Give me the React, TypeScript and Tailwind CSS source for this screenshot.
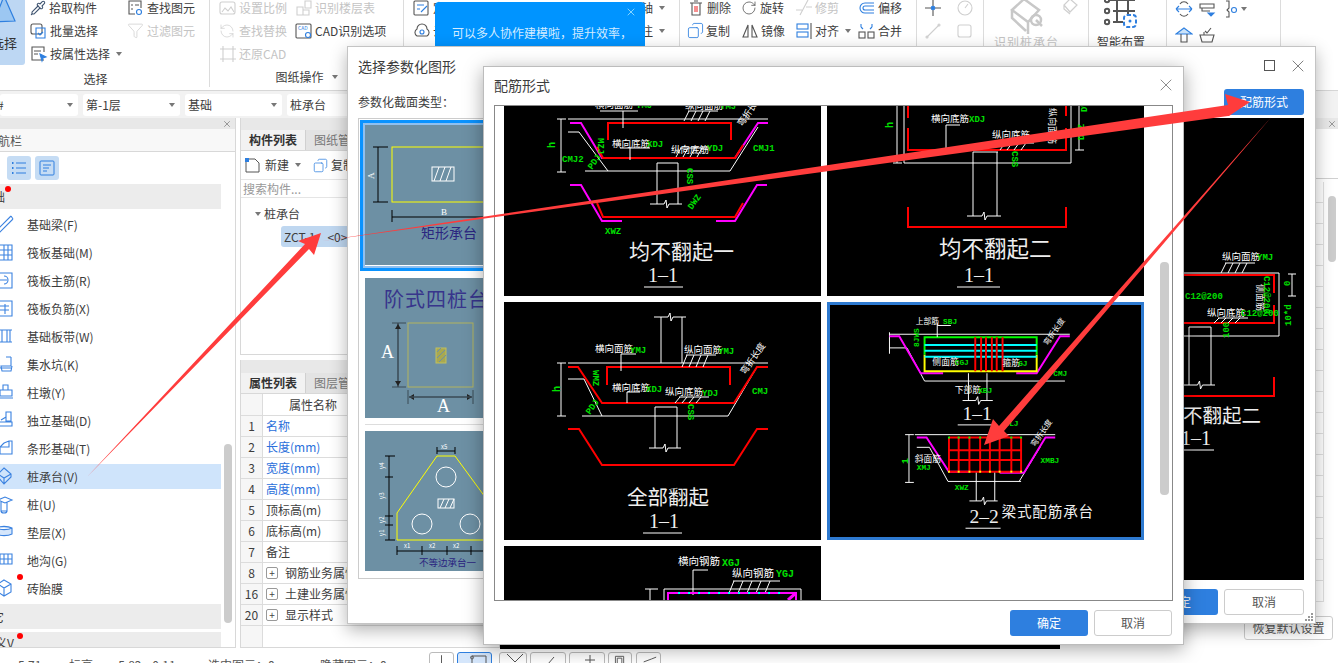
import { ReactNode } from 'react';
import { Copy, Filter, Pipette, RefreshCcw, RotateCw, X } from 'lucide-react';

const FONT = "font-['Noto_Sans_CJK_SC','Noto_Sans',sans-serif]";

const Caret = ({ className = '' }: { className?: string }) => (
  <span className={`inline-block w-0 h-0 border-x-[3px] border-x-transparent border-t-[4px] border-t-[#777] ${className}`} />
);

const Outline = ({ children, size = 18, color = '#555' }: { children: ReactNode; size?: number; color?: string }) => (
  <svg width={size} height={size} viewBox="0 0 18 18" fill="none" stroke={color} strokeWidth="1.1" className="shrink-0">
    {children}
  </svg>
);

const RibbonItem = ({
  icon,
  label,
  gray,
  caret,
  className = '',
}: {
  icon?: ReactNode;
  label: string;
  gray?: boolean;
  caret?: boolean;
  className?: string;
}) => (
  <div className={`h-[23px] flex items-center gap-[2px] whitespace-nowrap text-xs ${gray ? 'text-[#c4c4c4]' : 'text-[#3d3d3d]'} ${className}`}>
    {icon}
    <span>{label}</span>
    {caret && <Caret className="ml-1" />}
  </div>
);

const Group = ({
  width,
  label,
  caret,
  labelClass = '',
  children,
}: {
  width: string;
  label?: string;
  caret?: boolean;
  labelClass?: string;
  children: ReactNode;
}) => (
  <div className={`${width} shrink-0 h-[87px] border-r border-[#dcdcdc] flex flex-col relative`}>
    <div className="h-[70px] flex overflow-hidden">{children}</div>
    {label && (
      <div className={`flex-1 flex items-center justify-center gap-2 text-xs text-[#3d3d3d] ${labelClass}`}>
        {label}
        {caret && <Caret />}
      </div>
    )}
  </div>
);

const Ribbon = () => (
  <div className="h-[91px] flex border-b border-[#d6d6d6] bg-white overflow-hidden">
    <Group width="w-[210px]" label="选择" labelClass="pr-[18px]">
      <div className="w-[25px] h-[65px] bg-[#bdd7f3] rounded-br-[3px] relative overflow-hidden text-[13px] text-[#333]">
        <svg width="25" height="26" viewBox="0 0 25 26" fill="#9cc7f2" stroke="#2e7fdf" strokeWidth="1.2" className="absolute top-0 left-0">
          <path d="M-6 22 L4 -4 L15 21 Z" />
        </svg>
        <span className="absolute left-[-9px] top-[33px] whitespace-nowrap">选择</span>
      </div>
      <div className="w-[98px] ml-[5px] -mt-[4px] shrink-0">
        <RibbonItem
          label="拾取构件"
          icon={<Pipette size={16} color="#3f5470" strokeWidth={1.6} className="mr-[1px] w-[16px]" />}
        />
        <RibbonItem
          label="批量选择"
          icon={
            <Outline>
              <rect x="1" y="2" width="11" height="10" rx="2" />
              <path d="M6 6h9v10H6z" stroke="#2e7fdf" />
              <path d="M8 11l2 2 3-3" stroke="#2e7fdf" />
            </Outline>
          }
        />
        <RibbonItem
          label="按属性选择"
          caret
          icon={
            <Outline>
              <path d="M14 15H2V2h12v5" />
              <path d="M4 6h7M4 9h4" />
              <path d="M10 9l6 3-3 1-1 3z" fill="#2e7fdf" stroke="#2e7fdf" />
            </Outline>
          }
        />
      </div>
      <div className="-mt-[4px] ml-[-1px]">
        <RibbonItem
          label="查找图元"
          icon={
            <Outline>
              <path d="M8 15H2V2h12v7" />
              <path d="M4 6h2M8 6h4M4 10h2" />
              <circle cx="12" cy="13" r="2.5" stroke="#2e7fdf" />
            </Outline>
          }
        />
        <RibbonItem label="过滤图元" gray icon={<Filter size={17} color="#cfcfcf" strokeWidth={1.1} className="mr-[1px]" />} />
      </div>
    </Group>

    <Group width="w-[194px]" label="图纸操作" caret labelClass="pb-[2px]">
      <div className="ml-[9px] w-[97px] -mt-[4px] shrink-0">
        <RibbonItem
          label="设置比例"
          gray
          icon={
            <Outline color="#cfcfcf">
              <rect x="1" y="3" width="15" height="12" rx="2" />
              <path d="M3 13l3-4 3 3 3-4 3 5" />
            </Outline>
          }
        />
        <RibbonItem label="查找替换" gray icon={<RefreshCcw size={16} color="#cfcfcf" strokeWidth={1.1} className="mr-[2px]" />} />
        <RibbonItem
          label="还原CAD"
          gray
          icon={
            <Outline color="#cfcfcf">
              <path d="M4 1v16M1 4h16M14 1v16M1 14h16" />
            </Outline>
          }
        />
      </div>
      <div className="-mt-[4px] -ml-[21px]">
        <RibbonItem
          label="识别楼层表"
          gray
          icon={
            <Outline color="#cfcfcf">
              <path d="M2 8h6v8H2zM8 11h6v5H8zM10 2h6v7h-6z" />
            </Outline>
          }
        />
        <RibbonItem
          label="CAD识别选项"
          icon={
            <Outline>
              <rect x="1" y="2" width="15" height="14" rx="1" />
              <text x="3" y="8" fontSize="5" fill="#2e7fdf" stroke="none">CAD</text>
              <circle cx="13" cy="13" r="2.5" stroke="#2e7fdf" />
            </Outline>
          }
        />
      </div>
    </Group>

    <Group width="w-[276px]">
      <div className="w-full -mt-[4px] pl-[9px] pr-[14px] flex justify-between">
        <div>
          <RibbonItem
            label="定义"
            icon={
              <Outline>
                <rect x="1" y="2" width="14" height="14" rx="1" />
                <path d="M4 6h7M4 10h3M8 13l6-6" stroke="#2e7fdf" />
              </Outline>
            }
          />
          <RibbonItem
            label="云检查"
            icon={
              <Outline>
                <path d="M4 14a4 4 0 0 1 0-7 5 5 0 0 1 10 0 4 4 0 0 1 0 7z" />
                <circle cx="9" cy="10" r="2" stroke="#2e7fdf" />
              </Outline>
            }
          />
        </div>
        <div className="flex flex-col items-end">
          <RibbonItem label="轴" caret />
          <RibbonItem label="注" caret />
        </div>
      </div>
    </Group>

    <Group width="w-[237px]">
      <div className="-mt-[4px] ml-[7px] w-[54px] shrink-0">
        <RibbonItem
          label="删除"
          icon={
            <Outline>
              <path d="M3 4h12M5 4v12h8V4M7 2h4" />
              <path d="M8 7v6M10 7v6" stroke="#e33" />
            </Outline>
          }
        />
        <RibbonItem label="复制" icon={<Copy size={17} color="#2e7fdf" strokeWidth={1.2} className="-scale-x-100" />} />
      </div>
      <div className="-mt-[4px] w-[54px] shrink-0">
        <RibbonItem label="旋转" icon={<RotateCw size={16} color="#555" strokeWidth={1.2} className="mr-[1px]" />} />
        <RibbonItem
          label="镜像"
          icon={
            <Outline>
              <path d="M7 3L2 15h5zM11 3l5 12h-5z" />
            </Outline>
          }
        />
      </div>
      <div className="-mt-[4px] w-[63px] shrink-0">
        <RibbonItem
          label="修剪"
          gray
          icon={
            <Outline color="#cfcfcf">
              <path d="M1 11h6M11 8h6M13 1L5 16" />
            </Outline>
          }
        />
        <RibbonItem
          label="对齐"
          caret
          icon={
            <Outline color="#2e7fdf">
              <rect x="2" y="2" width="11" height="5" />
              <rect x="2" y="10" width="11" height="5" />
              <path d="M16 1v16" stroke="#555" />
            </Outline>
          }
        />
      </div>
      <div className="-mt-[4px]">
        <RibbonItem
          label="偏移"
          icon={
            <Outline color="#2e7fdf">
              <path d="M16 4H7a5 5 0 0 0 0 10h9M16 7H7a2 2 0 0 0 0 4h9" />
            </Outline>
          }
        />
        <RibbonItem
          label="合并"
          icon={
            <Outline>
              <rect x="1" y="10" width="6" height="6" />
              <rect x="10" y="10" width="6" height="6" />
              <path d="M3 5l2 2M14 5l-2 2M3 2v3M14 2v3" stroke="#2e7fdf" />
            </Outline>
          }
        />
      </div>
    </Group>

    <Group width="w-[67px]">
      <div className="flex flex-wrap content-start w-full pl-[7px] gap-x-[14px] gap-y-[5px] -mt-[1px]">
        <Outline color="#555">
          <path d="M9 1v6M9 11v6M1 9h6M11 9h6" />
          <circle cx="9" cy="9" r="1.8" fill="#2e7fdf" stroke="#2e7fdf" />
        </Outline>
        <Outline color="#cfcfcf">
          <circle cx="9" cy="9" r="7" />
          <path d="M9 9l3-4" />
        </Outline>
        <Outline color="#cfcfcf">
          <path d="M3 15L15 3" />
          <circle cx="3" cy="15" r="1" />
          <circle cx="15" cy="3" r="1" />
        </Outline>
        <Outline color="#cfcfcf">
          <rect x="2" y="3" width="13" height="12" rx="2" />
        </Outline>
      </div>
    </Group>

    <Group width="w-[105px]">
      <div className="w-full relative">
        <svg width="42" height="42" viewBox="0 0 42 42" fill="none" stroke="#c8c8c8" strokeWidth="2.5" className="absolute left-[22px] -top-[4px]">
          <path d="M18 3L33 14 22 26 6 14zM6 14v8l14 13M22 26v12M30 24l6 6" />
          <circle cx="30" cy="24" r="5" />
        </svg>
        <svg width="18" height="20" viewBox="0 0 18 20" fill="none" stroke="#cfcfcf" strokeWidth="1.2" className="absolute left-[78px] -top-[3px]">
          <path d="M8 2l7 6-7 7-6-7zM2 8v4l6 5" />
        </svg>
        <span className="absolute left-[10px] top-[34px] text-xs leading-4 tracking-[1px] text-[#c4c4c4] whitespace-nowrap">识别桩承台</span>
      </div>
    </Group>

    <Group width="w-[78px]">
      <div className="w-full relative">
        <svg width="34" height="34" viewBox="0 0 34 34" fill="none" strokeWidth="2" className="absolute left-[15px] -top-[4px]">
          <path d="M5 4h26M9 15h22M9 26h10M13 0v26M24 0v18" stroke="#555" />
          <circle cx="3" cy="4" r="2.2" stroke="#555" />
          <circle cx="3" cy="15" r="2.2" stroke="#555" />
          <circle cx="3" cy="26" r="2.2" stroke="#555" />
          <rect x="20" y="19" width="12" height="12" rx="3" stroke="#2e7fdf" strokeDasharray="4 2" />
          <circle cx="26" cy="25" r="1.5" fill="#2e7fdf" stroke="none" />
        </svg>
        <span className="absolute left-[8px] top-[34px] text-xs leading-4 text-[#3d3d3d] whitespace-nowrap">智能布置</span>
      </div>
    </Group>

    <Group width="w-[114px]">
      <div className="flex flex-wrap content-start w-[100px] pl-[8px] gap-x-[5px] gap-y-[4px]">
        <Outline color="#2e7fdf">
          <path d="M1 9h16M1 9l3-3M1 9l3 3M17 9l-3-3M17 9l-3 3" />
          <path d="M5 4c2-3 6-3 8 0M5 14c2 3 6 3 8 0" stroke="#555" />
        </Outline>
        <Outline>
          <path d="M2 4h14v4H2zM4 8v3h8" />
          <path d="M10 13h6l-3 3z" fill="#2e7fdf" stroke="#2e7fdf" />
        </Outline>
        <div className="flex items-center gap-[2px]">
          <Outline>
            <path d="M5 1h3v7l-2 2 2 2v5H5" />
            <circle cx="13" cy="10" r="2.5" stroke="#2e7fdf" />
          </Outline>
          <Caret />
        </div>
        <div className="basis-full h-0" />
        <Outline color="#2e7fdf">
          <path d="M1 8l8-6 8 6z" fill="#cbe3f9" />
          <path d="M6 8v8h6V8" stroke="#555" />
        </Outline>
        <Outline>
          <path d="M2 9h14l-2 7H4zM6 9V6M7 5l2 2 4-5" />
        </Outline>
      </div>
    </Group>
  </div>
);

const FilterSelect = ({ label, className }: { label: string; className: string }) => (
  <div className={`${className} h-[22px] bg-white rounded-[3px] flex items-center justify-between pl-[3px] pr-[5px] text-xs text-[#3d3d3d] overflow-hidden`}>
    <span>{label}</span>
    <Caret />
  </div>
);

const FilterBar = () => (
  <div className="h-[27px] bg-[#f2f2f2] flex items-center gap-[5px]">
    <div className="w-[78px] h-[22px] bg-white rounded-[3px] flex items-center justify-between pr-[5px] text-xs text-[#3d3d3d] overflow-hidden">
      <span className="-ml-[3px]">#</span>
      <Caret />
    </div>
    <FilterSelect label="第-1层" className="w-[97px]" />
    <FilterSelect label="基础" className="w-[97px]" />
    <FilterSelect label="桩承台" className="w-[97px]" />
  </div>
);

type NavItem = { label: string; icon: ReactNode; active?: boolean; dot?: boolean };

const navStroke = { fill: 'none', stroke: '#3b82e0', strokeWidth: 1.1 };

const navItems: NavItem[] = [
  { label: '基础梁(F)', icon: <path d="M-4 16L11 1M-1 18L13 4M11 1l2 3" {...navStroke} /> },
  { label: '筏板基础(M)', icon: <path d="M0 2h12v15H0M4 2v15M8 2v15M0 7h12M0 12h12" {...navStroke} /> },
  { label: '筏板主筋(R)', icon: <path d="M0 2h12v15H0M0 9h7M4 5a3 3 0 0 1 0 8" {...navStroke} /> },
  { label: '筏板负筋(X)', icon: <path d="M0 2h12v15H0M0 7h9M0 11h9M5 5v10" {...navStroke} /> },
  { label: '基础板带(W)', icon: <path d="M0 3h12M0 15h12M2 3v12M7 3v12M10 3v12" {...navStroke} /> },
  { label: '集水坑(K)', icon: <path d="M11 2v9H1l1 5h9l1-5M6 2h5M0 13h11" {...navStroke} /> },
  { label: '柱墩(Y)', icon: <path d="M3 2h5v5H3zM0 7h12v6H0zM0 15h13" {...navStroke} /> },
  { label: '独立基础(D)', icon: <path d="M6 1h5v9H6zM1 9l5-3M-1 11h13v4H-1z" {...navStroke} /> },
  { label: '条形基础(T)', icon: <path d="M4 4l5-2h3v13H0V8h9V2M0 8l4-4" {...navStroke} /> },
  { label: '桩承台(V)', icon: <path d="M4 1l7 6v3l-7 7-6-7V7zM-2 7l6 4 7-4M4 11v6" {...navStroke} />, active: true },
  { label: '桩(U)', icon: <path d="M-2 5l7-3 7 3-7 3zM1 7v9h6V7M1 16a3 2 0 0 0 6 0" {...navStroke} /> },
  { label: '垫层(X)', icon: <path d="M-4 5a10 4 0 0 1 16 0v6a10 4 0 0 1-16 0zM-4 5a10 4 0 0 0 16 0" {...navStroke} fill="#d5e6fb" /> },
  { label: '地沟(G)', icon: <path d="M0 3h12v10H0zM0 8h12M4 3v10M8 3v10" {...navStroke} /> },
  { label: '砖胎膜', icon: <path d="M4 1l7 4v8l-7 4-6-4V5zM-2 5l6 4 7-4M4 9v8" {...navStroke} />, dot: true },
];

const LeftNav = () => (
  <div className="w-[236px] shrink-0 h-[530px] border-r border-b border-[#d8d8d8] flex flex-col">
    <div className="h-[11px] bg-[#e8e8e8] flex items-center justify-end pr-[3px]">
      <X size={10} color="#888" />
    </div>
    <div className="h-[23px] border-b border-[#d8d8d8] bg-[#f8f8f8] flex items-center text-xs text-[#555] pt-[2px]">
      <span className="-ml-[2px]">航栏</span>
    </div>
    <div className="h-[32px] flex items-center pl-[7px] gap-[4px]">
      <div className="w-6 h-6 bg-[#c5dcf4] rounded-[3px] flex items-center justify-center">
        <svg width="16" height="14" viewBox="0 0 16 14" fill="none" stroke="#2e7fdf">
          <path d="M5 2h10M5 7h10M5 12h10" />
          <path d="M1 2h1.5M1 7h1.5M1 12h1.5" strokeWidth="2" />
        </svg>
      </div>
      <div className="w-6 h-6 bg-[#c5dcf4] rounded-[3px] flex items-center justify-center">
        <svg width="16" height="16" viewBox="0 0 16 16" fill="none" stroke="#2e7fdf">
          <rect x="1" y="1" width="14" height="14" rx="1" />
          <path d="M4 5h8M4 8h6M4 11h4" />
        </svg>
      </div>
    </div>
    <div className="relative flex-1 overflow-hidden pr-[14px]">
      <div className="relative h-[25px] bg-[#ececec] flex items-center text-xs text-[#3d3d3d] mb-[3px]">
        <span className="-ml-[19px]">基础</span>
        <span className="absolute left-[5px] top-[2px] w-[6px] h-[6px] rounded-full bg-[#f00]" />
      </div>
      {navItems.map((item) => (
        <div
          key={item.label}
          className={`relative h-[25px] mb-[3px] flex items-center text-xs text-[#3d3d3d] ${item.active ? 'bg-[#cfe4fb]' : ''}`}
        >
          <svg width="14" height="19" viewBox="0 0 14 19" className="shrink-0 mr-[13px] overflow-hidden">
            {item.icon}
          </svg>
          {item.label}
          {item.dot && <span className="absolute left-[17px] top-[-2px] w-[6px] h-[6px] rounded-full bg-[#f00]" />}
        </div>
      ))}
      <div className="relative h-[25px] bg-[#ececec] flex items-center text-xs text-[#3d3d3d] mb-[3px]">
        <span className="-ml-[20px]">其它</span>
      </div>
      <div className="relative h-[25px] bg-[#ececec] flex items-start pt-[3px] text-xs text-[#3d3d3d]">
        <span className="-ml-[29px] whitespace-nowrap">自定义V</span>
        <span className="absolute left-[17px] top-[1px] w-[6px] h-[6px] rounded-full bg-[#f00]" />
      </div>
      <div className="absolute right-[3px] top-[260px] w-[8px] h-[179px] rounded bg-[#cccccc]" />
    </div>
  </div>
);

const propRows: { n: number; label: string; blue?: boolean; plus?: boolean }[] = [
  { n: 1, label: '名称', blue: true },
  { n: 2, label: '长度(mm)', blue: true },
  { n: 3, label: '宽度(mm)', blue: true },
  { n: 4, label: '高度(mm)', blue: true },
  { n: 5, label: '顶标高(m)' },
  { n: 6, label: '底标高(m)' },
  { n: 7, label: '备注' },
  { n: 8, label: '钢筋业务属性', plus: true },
  { n: 16, label: '土建业务属性', plus: true },
  { n: 20, label: '显示样式', plus: true },
];

const TabBar = ({ first, second }: { first: string; second: string }) => (
  <div className="h-[21px] flex bg-[#e3e3e3] text-xs border-b border-[#d8d8d8]">
    <div className="w-[65px] flex items-center justify-center font-bold bg-[#f2f2f2] text-[#333] border-r border-[#d0d0d0]">{first}</div>
    <div className="flex items-center pl-[8px] text-[#777]">{second}</div>
  </div>
);

const MiddlePanel = () => (
  <div className="w-[260px] shrink-0 ml-[4px] flex flex-col">
    <div className="h-[237px] border border-[#d8d8d8] border-t-0 flex flex-col">
      <div className="h-[12px] bg-[#e8e8e8]" />
      <TabBar first="构件列表" second="图纸管理" />
      <div className="h-[28px] flex items-center pl-[4px] text-xs text-[#3d3d3d]">
        <svg width="15" height="15" viewBox="0 0 15 15" fill="none" stroke="#555" className="mr-[5px]">
          <path d="M1 1h9l4 4v9H1z" />
          <rect x="0" y="0" width="4" height="4" fill="#2e7fdf" stroke="none" />
        </svg>
        新建
        <Caret className="ml-[6px] mr-[12px]" />
        <Copy size={15} color="#2e7fdf" strokeWidth={1.2} className="-scale-x-100 mr-[3px]" />
        复制
      </div>
      <div className="h-[19px] border-y border-[#e5e5e5] pl-[2px] flex items-center text-xs text-[#999]">搜索构件...</div>
      <div className="h-[28px] flex items-center pl-[14px] text-xs text-[#3d3d3d] pt-[3px]">
        <Caret className="mr-[3px]" />
        桩承台
      </div>
      <div className="ml-[40px] h-[21px] bg-[#bfd7f0] rounded-l-[3px] flex items-center pl-[3px] text-xs text-[#3d3d3d]">
        ZCT-1<span className="ml-[12px]">&lt;0&gt;</span>
      </div>
    </div>
    <div className="h-[5px]" />
    <div className="h-[288px] border border-[#d8d8d8] border-t-0 flex flex-col">
      <div className="h-[13px] bg-[#e8e8e8]" />
      <TabBar first="属性列表" second="图层管理" />
      <div className="flex h-[22px] border-b border-[#dcdcdc] text-xs text-[#3d3d3d]">
        <div className="w-[22px] bg-[#f6f6f6] border-r border-[#dcdcdc]" />
        <div className="pl-[26px] leading-[21px]">属性名称</div>
      </div>
      {propRows.map((r) => (
        <div key={r.n} className="flex h-[21px] border-b border-[#dcdcdc] text-xs">
          <div className="w-[22px] bg-[#f6f6f6] border-r border-[#dcdcdc] text-center leading-[20px] text-[#3d3d3d]">{r.n}</div>
          <div className={`flex items-center pl-[3px] whitespace-nowrap ${r.blue ? 'text-[#2a6fdb]' : 'text-[#3d3d3d]'}`}>
            {r.plus && (
              <span className="w-[12px] h-[12px] border border-[#999] rounded-[2px] flex items-center justify-center text-[10px] leading-none mr-[7px] text-[#444]">+</span>
            )}
            {r.label}
          </div>
        </div>
      ))}
      <div className="flex-1 flex">
        <div className="w-[22px] bg-[#f6f6f6] border-r border-[#dcdcdc]" />
      </div>
    </div>
  </div>
);

const RightPanel = () => (
  <div className="flex-1 ml-[4px] flex flex-col relative">
    <div className="h-[11px] bg-[#e8e8e8] flex items-center justify-end pr-[1px]">
      <X size={10} color="#888" />
    </div>
    <div className="h-[50px] border-b border-[#d0d0d0]" />
    <div className="h-[3px]" />
    {Array.from({ length: 20 }).map((_, i) => (
      <div key={i} className="h-[21px] w-[260px] border-b border-r border-[#e0e0e0] shrink-0" />
    ))}
    <div className="absolute right-[2px] top-[78px] w-[8px] h-[66px] rounded bg-[#cccccc]" />
    <div className="absolute right-[5px] top-[498px] w-[89px] h-[24px] bg-white border border-[#ccc] rounded-[3px] flex items-center justify-center text-xs text-[#555]">
      恢复默认设置
    </div>
  </div>
);

const statusTools: { w: string; ml: string; active?: boolean; icon: ReactNode }[] = [
  { w: 'w-[25px]', ml: '', icon: <path d="M12 2v9h8" /> },
  { w: 'w-[35px]', ml: 'ml-[3px]', active: true, icon: <path d="M9 3h14v9H9zM9 3a1.5 1.5 0 1 0 .1 0" /> },
  { w: 'w-[28px]', ml: 'ml-[7px]', icon: <path d="M6 1l8 8 8-8" /> },
  { w: 'w-[36px]', ml: 'ml-[3px]', icon: <path d="M12 11l6-7" /> },
  { w: 'w-[36px]', ml: 'ml-[3px]', icon: <path d="M10 7h10M15 2v9" /> },
  { w: 'w-[24px]', ml: 'ml-[3px]', icon: <path d="M7 3h9v9H7zM9 5h5v7H9z" /> },
  { w: 'w-[25px]', ml: 'ml-[4px]', icon: <path d="M7 9l8-3 5-2" /> },
];

const StatusBar = () => (
  <div className="h-[14px] flex text-xs text-[#555] bg-white overflow-hidden relative">
    <div className="flex pt-[8px] leading-4 whitespace-nowrap">
      <span className="ml-[18px] w-[51px]">5.71</span>
      <span className="w-[45px]">标高</span>
      <span className="w-[94px]">-5.82~-0.11</span>
      <span className="w-[112px]">选中图元：0</span>
      <span>隐藏图元：0</span>
    </div>
    <div className="absolute left-[429px] top-[3px] flex">
      {statusTools.map((t, i) => (
        <div
          key={i}
          className={`${t.w} ${t.ml} h-[20px] border rounded-[3px] flex justify-center ${t.active ? 'border-[#2e7fdf] bg-[#d5e6fb]' : 'border-[#bbb]'}`}
        >
          <svg width="24" height="14" viewBox="0 0 24 14" fill="none" stroke="#555">
            {t.icon}
          </svg>
        </div>
      ))}
    </div>
  </div>
);

const CadText = ({ x, y, t, size = 9.5, rotate }: { x: number; y: number; t: string; size?: number; rotate?: number }) => (
  <text x={x} y={y} fontSize={size} fill="#fff" transform={rotate ? `rotate(${rotate} ${x} ${y})` : undefined}>
    {t}
  </text>
);

const Green = ({ x, y, t, size = 9, rotate }: { x: number; y: number; t: string; size?: number; rotate?: number }) => (
  <text
    x={x}
    y={y}
    fontSize={size}
    fill="#00e000"
    className="font-['Liberation_Mono',monospace] font-bold"
    transform={rotate ? `rotate(${rotate} ${x} ${y})` : undefined}
  >
    {t}
  </text>
);

const Line = ({ p, c = '#fff', w = 1 }: { p: string; c?: string; w?: number }) => (
  <polyline points={p} fill="none" stroke={c} strokeWidth={w} />
);

const Big = ({ x, y, t, size = 20 }: { x: number; y: number; t: string; size?: number }) => (
  <text x={x} y={y} fontSize={size} fill="#eeeeee">
    {t}
  </text>
);

const Section = ({ x, y, t, x1, x2 }: { x: number; y: number; t: string; x1: number; x2: number }) => (
  <>
    <text x={x} y={y} fontSize={20} textAnchor="middle" fill="#eeeeee" className="font-['Liberation_Serif',serif]">
      {t}
    </text>
    <Line p={`${x1},${y + 5} ${x2},${y + 5}`} />
  </>
);

const Break = ({ x1, x2, y }: { x1: number; x2: number; y: number }) => {
  const m = (x1 + x2) / 2;
  return <Line p={`${x1},${y} ${m - 2},${y} ${m},${y - 4} ${m + 1},${y + 4} ${m + 3},${y} ${x2},${y}`} />;
};

// slanted strokes under a rebar label
const Hatch = ({ x, y, n = 4, gap = 7, h = 10 }: { x: number; y: number; n?: number; gap?: number; h?: number }) => (
  <>
    <Line p={`${x + 4},${y} ${x + n * gap + 6},${y}`} />
    {Array.from({ length: n }).map((_, i) => (
      <Line key={i} p={`${x + i * gap + 5},${y} ${x + i * gap},${y + h}`} />
    ))}
  </>
);

const CadCellOne = () => (
  <svg viewBox="504 106 317 190" className="w-[317px] h-[190px] bg-black">
    <Line p="568,119 768,119" />
    <Line p="561,119 561,172" />
    <Line p="557,119 566,119" />
    <Line p="557,172 566,172" />
    <Line p="585,171 730,171" />
    <Line p="568,132 579,132 608,171" />
    <Line p="730,171 758,127" />
    <Line p="570,123 581,123 602,158 622,158" c="#f0f" w="2" />
    <Line p="715,158 735,158 758,123 768,123" c="#f0f" w="2" />
    <Line p="608,140 608,123 731,123 731,140" c="#f00" w="2" />
    <Line p="597,147 603,158 735,158 743,145" c="#f00" w="2" />
    <Line p="657,163 657,204" />
    <Line p="678,163 678,204" />
    <Line p="657,163 678,163" />
    <Break x1={650} x2={682} y={204} />
    <Line p="570,185 581,185 602,221 622,221" c="#f0f" w="2" />
    <Line p="716,221 735,221 757,185 767,185" c="#f0f" w="2" />
    <Line p="597,203 603,217 735,217 743,203" c="#f00" w="2" />
    <Line p="600,111 638,111" />
    <Line p="623,111 623,128" />
    <Line p="630,147 630,160" />
    <Line p="620,148 650,148" />
    <Hatch x={684} y={111} />
    <Hatch x={676} y={148} h={9} />
    <CadText x={595} y={108} t="横向面筋" />
    <Green x={636} y={108} t="YMJ" />
    <CadText x={685} y={109} t="纵向面筋" />
    <Green x={720} y={109} t="YMJ" />
    <CadText x={612} y={147} t="横向底筋" />
    <Green x={647} y={147} t="XDJ" />
    <CadText x={671} y={153} t="纵向底筋" />
    <Green x={707} y={151} t="YDJ" />
    <Green x={562} y={162} t="CMJ2" />
    <Green x={753} y={151} t="CMJ1" />
    <Green x={555} y={148} t="h" size={10} rotate={-90} />
    <Green x={598} y={138} t="MZJ" rotate={90} />
    <Green x={592} y={170} t="PDJ" rotate={-55} />
    <Green x={692} y={210} t="DWZ" rotate={-55} />
    <Green x={605} y={234} t="XWZ" />
    <Green x={687} y={168} t="CSS" rotate={90} />
    <CadText x={742} y={127} t="弯折长度" size={9} rotate={-55} />
    <Big x={629} y={259} t="均不翻起一" size={21} />
    <Section x={663} y={282} t="1–1" x1={644} x2={683} />
  </svg>
);

const CadCellTwo = () => (
  <svg viewBox="827 106 317 190" className="w-[317px] h-[190px] bg-black">
    <Line p="904,106 904,163 1071,163 1071,106" />
    <Line p="897,106 897,163" />
    <Line p="893,163 902,163" />
    <Line p="908,106 908,118" c="#f00" w="2" />
    <Line p="908,128 908,150 1066,150 1066,128" c="#f00" w="2" />
    <Line p="1066,106 1066,116" c="#f00" w="2" />
    <Line p="1079,106 1079,150" />
    <Line p="1075,150 1084,150" />
    <Line p="973,152 998,152" />
    <Line p="973,152 973,216" />
    <Line p="997,152 997,216" />
    <Break x1={967} x2={1001} y={216} />
    <Line p="908,207 908,227 1066,227 1066,207" c="#f00" w="2" />
    <Line p="946,150 946,125 960,125" />
    <Hatch x={1000} y={143} h={7} />
    <CadText x={931} y={122} t="横向底筋" />
    <Green x={969} y={122} t="XDJ" />
    <CadText x={992} y={138} t="纵向底筋" />
    <CadText x={1049} y={108} t="纵向面筋" size={9} rotate={90} />
    <Green x={1087} y={112} t="DWZ" rotate={-90} />
    <Green x={1084} y={140} t="DWZ" rotate={-90} />
    <Green x={893} y={128} t="h" size={10} rotate={-90} />
    <Green x={1012} y={151} t="CSS" rotate={90} />
    <Big x={939} y={257} t="均不翻起二" size={22.5} />
    <Section x={979} y={282} t="1–1" x1={957} x2={1000} />
  </svg>
);

const CadCellThree = () => (
  <svg viewBox="504 302 317 238" className="w-[317px] h-[238px] bg-black">
    <Line p="661,317 661,363" />
    <Line p="682,317 682,363" />
    <Break x1={654} x2={686} y={317} />
    <Line p="568,363 768,363" />
    <Line p="561,363 561,416" />
    <Line p="557,363 566,363" />
    <Line p="557,416 566,416" />
    <Line p="568,379 584,379 602,416" />
    <Line p="582,416 728,416" />
    <Line p="728,416 757,367" />
    <Line p="568,367 578,367 602,403 734,403 757,367 768,367" c="#f00" w="2" />
    <Line p="607,385 607,367 730,367 730,385" c="#f00" w="2" />
    <Line p="655,407 677,407" />
    <Line p="655,407 655,448" />
    <Line p="677,407 677,448" />
    <Break x1={649} x2={681} y={448} />
    <Line p="568,429 579,429 602,465 734,465 757,429 768,429" c="#f00" w="2" />
    <Line p="621,371 621,354 636,354" />
    <Line p="627,403 627,392 640,392" />
    <Hatch x={682} y={355} h={12} />
    <Hatch x={675} y={397} h={6} />
    <CadText x={595} y={352} t="横向面筋" />
    <Green x={630} y={353} t="YMJ" />
    <CadText x={684} y={353} t="纵向面筋" />
    <Green x={718} y={354} t="YMJ" />
    <CadText x={612} y={391} t="横向底筋" />
    <Green x={646} y={392} t="XDJ" />
    <CadText x={665} y={395} t="纵向底筋" />
    <Green x={702} y={396} t="YDJ" />
    <Green x={752} y={394} t="CMJ" />
    <Green x={560} y={392} t="h" size={10} rotate={-90} />
    <Green x={593} y={370} t="WMZ" rotate={90} />
    <Green x={590} y={415} t="PDJ" rotate={-55} />
    <Green x={688} y={404} t="CSS" rotate={90} />
    <CadText x={745} y={375} t="弯折长度" size={9} rotate={-55} />
    <Big x={627} y={505} t="全部翻起" size={20.5} />
    <Section x={664} y={528} t="1–1" x1={643} x2={682} />
  </svg>
);

const gridV = [948, 958, 969, 980, 990, 1000, 1012, 1022];
const gridH = [438, 451, 461, 473];
const redV = [975, 981, 986, 992, 997, 1003];

const CadCellFour = () => (
  <svg viewBox="827 302 317 238" className="w-[317px] h-[238px] bg-black border-[3px] border-[#2e7ad0]">
    <Line p="887,332 1072,332" />
    <Line p="887,330 887,352" />
    <Line p="887,346 905,346 923,380" />
    <Line p="923,380 1067,380" />
    <Line p="887,334 897,334 919,372 942,372" c="#f0f" w="2" />
    <Line p="1017,372 1038,372 1062,334 1072,334" c="#f0f" w="2" />
    <Line p="923,353 923,370 1038,370 1038,353" c="#ff0" w="2" />
    <Line p="923,353 923,335 1038,335 1038,353" c="#0f0" w="2" />
    <Line p="923,343 1038,343" c="#0ff" w="2" />
    <Line p="923,349 1038,349" c="#0ff" w="2" />
    <Line p="923,355 1038,355" c="#0ff" w="2" />
    {redV.map((x) => (
      <Line key={x} p={`${x},335 ${x},370`} c="#f00" w="2" />
    ))}
    <Line p="968,372 968,400" />
    <Line p="987,372 987,400" />
    <Break x1={962} x2={993} y={400} />
    <Line p="936,320 936,335" />
    <Line p="936,323 950,323" />
    <CadText x={914} y={322} t="上部筋" size={8} />
    <Green x={942} y={321} t="SBJ" size={8} />
    <CadText x={931} y={364} t="侧面筋" size={9} />
    <Green x={954} y={364} t="CGJ" size={8} />
    <CadText x={1003} y={365} t="箍筋" size={9} />
    <Green x={1019} y={365} t="GJ" size={8} />
    <CadText x={954} y={392} t="下部筋" size={9} />
    <Green x={978} y={392} t="XBJ" size={8} />
    <Green x={1055} y={375} t="CMJ" size={8} />
    <Green x={917} y={345} t="8JWS" size={8} rotate={-90} />
    <CadText x={1049} y={344} t="弯折长度" size={8} rotate={-55} />
    <Section x={977} y={420} t="1–1" x1={957} x2={995} />

    <Line p="913,435 1057,435" />
    <Line p="907,435 907,484" />
    <Line p="903,435 912,435" />
    <Line p="903,484 912,484" />
    <Line p="915,448 928,448 947,483" />
    <Line p="1020,483 1042,447" />
    <Line p="947,483 1022,483" />
    <Line p="915,438 925,438 948,473 970,473" c="#f0f" w="2" />
    <Line p="1000,474 1025,474 1047,438 1057,438" c="#f0f" w="2" />
    {gridV.map((x) => (
      <Line key={x} p={`${x},438 ${x},473`} c="#f00" w="2" />
    ))}
    {gridH.map((y) => (
      <Line key={y} p={`948,${y} 1022,${y}`} c="#f00" w="2" />
    ))}
    {gridV.map((x) => (
      <rect key={x} x={x - 1} y={437} width="2" height="2" fill="#0f0" />
    ))}
    {gridV.map((x) => (
      <rect key={x} x={x - 1} y={472} width="2" height="2" fill="#ff0" />
    ))}
    <Line p="976,474 976,503" />
    <Line p="995,474 995,503" />
    <Break x1={969} x2={998} y={503} />
    <CadText x={913} y={463} t="斜面筋" size={9} />
    <Green x={915} y={471} t="XMJ" size={8} />
    <Green x={1042} y={464} t="XMBJ" size={8} />
    <Green x={954} y={492} t="XWZ" size={8} />
    <Green x={906} y={465} t="1" size={10} rotate={-90} />
    <Green x={1005} y={426} t="SLJ" size={8} />
    <CadText x={1036} y={448} t="弯折长度" size={8} rotate={-55} />
    <Section x={984} y={526} t="2–2" x1={965} x2={1001} />
    <text x={1002} y={519} fontSize={15} fill="#eeeeee" letterSpacing="0.8">
      梁式配筋承台
    </text>
  </svg>
);

const CadCellFive = () => (
  <svg viewBox="504 546 317 60" className="w-[317px] h-[60px] bg-black">
    <CadText x={678} y={565} t="横向钢筋" size={10.5} />
    <Green x={722} y={566} t="XGJ" size={10} />
    <CadText x={732} y={577} t="纵向钢筋" size={10.5} />
    <Green x={776} y={577} t="YGJ" size={10} />
    <Line p="693,595 693,570 708,570" />
    <Hatch x={729} y={581} n={5} gap={9} h={12} />
    <Line p="664,606 664,589 801,589 801,606" />
    <Line p="668,606 668,593 796,593 796,606" c="#f0f" w="2" />
    <Line p="788,600 796,593" c="#f0f" w="3" />
    <Line p="645,589 658,589" />
    <Line p="650,589 650,606" />
    {[678, 688, 698, 708, 718, 728, 738, 748, 758, 768, 778].map((x) => (
      <rect key={x} x={x} y={592} width="2" height="2" fill="#0ff" />
    ))}
  </svg>
);

const SideImage = () => (
  <svg viewBox="1184 118 120 462" className="w-[120px] h-[462px] bg-black">
    <Line p="1184,273 1279,273 1279,336 1184,336" />
    <Line p="1184,275 1274,275 1274,293" c="#f00" w="2" />
    <Line p="1274,305 1274,323 1184,323" c="#f00" w="2" />
    <Line p="1189,327 1211,327" />
    <Line p="1189,327 1189,385" />
    <Line p="1211,327 1211,385" />
    <Break x1={1184} x2={1215} y={385} />
    <Line p="1274,377 1274,396 1184,396" c="#f00" w="2" />
    <Line p="1292,274 1292,296" />
    <Line p="1288,274 1296,274" />
    <Line p="1288,296 1296,296" />
    <Hatch x={1221} y={263} h={10} />
    <Hatch x={1214} y={318} h={5} />
    <CadText x={1222} y={260} t="纵向面筋" />
    <Green x={1257} y={260} t="YMJ" />
    <Green x={1185} y={299} t="C12@200" />
    <CadText x={1207} y={316} t="纵向底筋" />
    <Green x={1241} y={316} t="C12@200" />
    <CadText x={1257} y={284} t="侧面筋" size={9} rotate={90} />
    <Green x={1264} y={276} t="C12@200" rotate={90} />
    <Green x={1291} y={326} t="10*d" rotate={-90} />
    <Green x={1290} y={286} t="0" rotate={-90} />
    <Green x={1229} y={338} t="100" rotate={-90} />
    <Big x={1183} y={423} t="不翻起二" size={19.5} />
    <text x={1181} y={445} fontSize={20} fill="#eeeeee" className="font-['Liberation_Serif',serif]">
      1–1
    </text>
    <Line p="1184,450 1214,450" />
  </svg>
);

const Card = ({ children }: { children: ReactNode }) => (
  <svg viewBox="365 0 150 140" className="w-[150px] h-[140px] bg-[#6d90a4] block">
    {children}
  </svg>
);

const ParamList = () => (
  <div className="w-[140px] h-[461px] border border-[#ccc] overflow-hidden bg-white">
    <div className="m-[1px] w-[250px] h-[151px] border-[3px] border-[#0a93ff] outline-2 outline-[#8fc0f0] -outline-offset-[5px] p-[2px]">
      <Card>
        <Line p="373,22 388,22" c="#000" />
        <Line p="378,22 378,77" c="#000" />
        <Line p="373,77 388,77" c="#000" />
        <rect x="392" y="22" width="150" height="55" fill="none" stroke="#ff0" />
        <rect x="432" y="42" width="22" height="14" fill="none" stroke="#fff" />
        <path d="M434 56l5-14M440 56l5-14M446 56l5-14" stroke="#fff" />
        <Line p="392,85 392,97" c="#000" />
        <Line p="392,92 520,92" c="#000" />
        <text x="441" y="90" fontSize="9" fill="#fff" className="font-['Liberation_Serif',serif]">B</text>
        <text x="374" y="54" fontSize="9" fill="#fff" transform="rotate(-90 374 54)" className="font-['Liberation_Serif',serif]">A</text>
        <text x="421" y="113" fontSize="14" fill="#2b2580">矩形承台</text>
      </Card>
    </div>
    <div className="h-[1px]" />
    <div className="ml-[6px] mt-[5px]">
      <Card>
        <text x="384" y="29" fontSize="20" fill="#38358c" letterSpacing="1">阶式四桩台</text>
        <rect x="408" y="45" width="65" height="64" fill="none" stroke="#b3b35e" />
        <rect x="436" y="70" width="10" height="15" fill="#a8a850" stroke="#c0c060" />
        <path d="M437 74l4-4M437 80l8-8M439 84l7-7" stroke="#6d90a4" />
        <Line p="398,45 398,109" c="#3a4a55" w="1.5" />
        <Line p="392,45 406,45" c="#3a4a55" />
        <Line p="392,109 406,109" c="#3a4a55" />
        <path d="M398 46l-3 5h6zM398 108l-3-5h6zM409 119l5-3v6zM472 119l-5-3v6z" fill="#222" />
        <Line p="409,119 472,119" c="#3a4a55" w="1.5" />
        <Line p="408,112 408,126" c="#3a4a55" />
        <Line p="473,112 473,126" c="#3a4a55" />
        <text x="381" y="80" fontSize="18" fill="#fff" className="font-['Liberation_Serif',serif]">A</text>
        <text x="437" y="134" fontSize="18" fill="#fff" className="font-['Liberation_Serif',serif]">A</text>
      </Card>
    </div>
    <div className="border-t border-[#ddd] mt-[6px] ml-[6px] pt-[6px]">
      <Card>
        <polygon points="397,109 397,82 437,25 455,25 510,100 510,109" fill="none" stroke="#ff0" />
        <circle cx="446" cy="46" r="10" fill="none" stroke="#fff" />
        <circle cx="422" cy="93" r="10" fill="none" stroke="#fff" />
        <circle cx="470" cy="93" r="10" fill="none" stroke="#fff" />
        <rect x="438" y="68" width="16" height="9" fill="none" stroke="#fff" />
        <path d="M440 77l4-9M445 77l4-9M450 77l4-9" stroke="#fff" />
        <Line p="389,25 389,109" c="#000" />
        <Line p="385,25 395,25" c="#000" />
        <Line p="385,46 393,46" c="#000" />
        <Line p="385,85 393,85" c="#000" />
        <Line p="385,94 393,94" c="#000" />
        <Line p="385,109 395,109" c="#000" />
        <Line p="437,20 455,20" c="#000" />
        <Line p="437,16 437,23" c="#000" />
        <Line p="455,16 455,23" c="#000" />
        <Line p="397,120 500,120" c="#000" />
        {[397, 422, 447, 471].map((x) => (
          <Line key={x} p={`${x},115 ${x},124`} c="#000" />
        ))}
        <text x="441" y="18" fontSize="6" fill="#fff">x5</text>
        <text x="404" y="117" fontSize="6" fill="#fff">x1</text>
        <text x="429" y="117" fontSize="6" fill="#fff">x2</text>
        <text x="453" y="117" fontSize="6" fill="#fff">x2</text>
        <text x="384" y="38" fontSize="6" fill="#fff" transform="rotate(-90 384 38)">y4</text>
        <text x="384" y="68" fontSize="6" fill="#fff" transform="rotate(-90 384 68)">y3</text>
        <text x="384" y="92" fontSize="6" fill="#fff" transform="rotate(-90 384 92)">y2</text>
        <text x="384" y="105" fontSize="6" fill="#fff" transform="rotate(-90 384 105)">y1</text>
        <text x="419" y="135" fontSize="9.5" fill="#2b2580">不等边承台一</text>
      </Card>
    </div>
  </div>
);

const DialogOne = () => (
  <div className="absolute left-[347px] top-[46px] w-[969px] h-[578px] bg-white border border-[#c4c4c4] shadow-[0_6px_16px_rgba(0,0,0,0.3)] flex flex-col z-20">
    <div className="h-[37px] mb-[2px] flex items-center justify-between pl-[10px] pr-[7px] text-sm text-[#3d3d3d]">
      <span>选择参数化图形</span>
      <div className="flex items-center gap-[13px]">
        <span className="w-[11px] h-[11px] border border-[#555]" />
        <X size={20} color="#666" strokeWidth={1} />
      </div>
    </div>
    <div className="h-[32px] flex items-center justify-between pl-[10px] pr-[11px] text-xs text-[#3d3d3d]">
      <span>参数化截面类型：</span>
      <div className="w-[80px] h-[26px] bg-[#2e7fdf] rounded-[3px] text-white flex items-center justify-center">配筋形式</div>
    </div>
    <div className="flex justify-between pl-[10px] pr-[11px]">
      <ParamList />
      <SideImage />
    </div>
    <div className="flex-1 flex justify-end items-center gap-[6px] pr-[11px] text-xs pt-[1px]">
      <div className="w-[78px] h-[26px] bg-[#2e7fdf] rounded-[3px] text-white flex items-center justify-center">确定</div>
      <div className="w-[80px] h-[26px] bg-white border border-[#ccc] rounded-[3px] text-[#555] flex items-center justify-center">取消</div>
    </div>
    <svg width="9" height="9" viewBox="0 0 9 9" fill="#999" className="absolute right-[1px] bottom-[1px]">
      <rect x="6" y="0" width="2" height="2" />
      <rect x="3" y="3" width="2" height="2" />
      <rect x="6" y="3" width="2" height="2" />
      <rect x="0" y="6" width="2" height="2" />
      <rect x="3" y="6" width="2" height="2" />
      <rect x="6" y="6" width="2" height="2" />
    </svg>
  </div>
);

const DialogTwo = () => (
  <div className="absolute left-[483px] top-[66px] w-[701px] h-[579px] bg-white border border-[#bcbcbc] shadow-[0_4px_18px_rgba(0,0,0,0.35)] flex flex-col z-30">
    <div className="h-[35px] mb-[3px] flex items-center justify-between pl-[10px] pr-[7px] text-sm text-[#3d3d3d]">
      <span>配筋形式</span>
      <X size={20} color="#777" strokeWidth={1} />
    </div>
    <div className="mx-[10px] h-[496px] border border-[#888] overflow-hidden relative bg-white">
      <div className="grid grid-cols-[317px_317px] gap-x-[6px] gap-y-[6px] ml-[9px]">
        <CadCellOne />
        <CadCellTwo />
        <CadCellThree />
        <CadCellFour />
        <CadCellFive />
      </div>
      <div className="absolute left-[665px] top-[156px] w-[9px] h-[233px] rounded bg-[#cccccc]" />
    </div>
    <div className="flex-1 flex justify-end items-center gap-[6px] pr-[11px] text-xs">
      <div className="w-[78px] h-[26px] bg-[#2e7fdf] rounded-[3px] text-white flex items-center justify-center">确定</div>
      <div className="w-[78px] h-[26px] bg-white border border-[#ccc] rounded-[3px] text-[#555] flex items-center justify-center">取消</div>
    </div>
  </div>
);

const Tooltip = () => (
  <div className="absolute left-[435px] top-[2px] w-[210px] h-[60px] bg-[#0094ff] rounded-t-[4px] text-xs text-[#d5ecff] z-10">
    <X size={12} color="#dff" strokeWidth={1.2} className="absolute right-[8px] top-[4px]" />
    <div className="pl-[17px] pt-[23px]">可以多人协作建模啦，提升效率，</div>
  </div>
);

const Arrows = () => (
  <svg width="1338" height="663" viewBox="0 0 1338 663" className="absolute inset-0 z-40 pointer-events-none">
    <polygon fill="#ff3c3c" points="322,241 1228,105 1225,94 1250,102 1229,116 1228,116" />
    <polygon fill="#ff3c3c" points="87,477 305,244 298,241 321,233 314,255 309,249" />
    <polygon fill="#ff3c3c" points="1273,115 999,426 993,419 984,445 1009,436 1004,431" />
  </svg>
);

export default function App() {
  return (
    <div className={`relative w-[1338px] h-[663px] overflow-hidden bg-white ${FONT}`}>
      <Ribbon />
      <FilterBar />
      <div className="flex h-[531px]">
        <LeftNav />
        <MiddlePanel />
        <div className="w-[560px] shrink-0 bg-black mt-[526px]" />
        <RightPanel />
      </div>
      <StatusBar />
      <Tooltip />
      <DialogOne />
      <DialogTwo />
      <Arrows />
    </div>
  );
}
